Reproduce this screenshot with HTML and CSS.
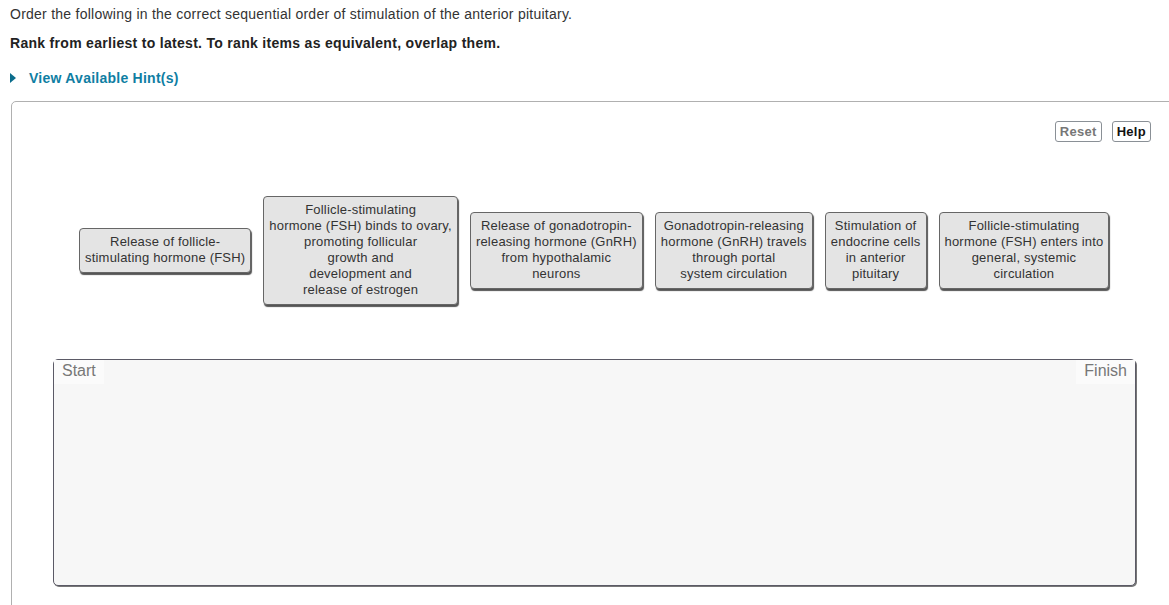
FILE: index.html
```html
<!DOCTYPE html>
<html>
<head>
<meta charset="utf-8">
<link rel="stylesheet" href="styles.css">
</head>
<body>
<div class="page">
  <p class="prompt">Order the following in the correct sequential order of stimulation of the anterior pituitary.</p>
  <p class="instr">Rank from earliest to latest. To rank items as equivalent, overlap them.</p>
  <div class="hint"><span class="tri"></span><span class="hint-text">View Available Hint(s)</span></div>
  <div class="panel">
    <div class="toolbar">
      <button class="btn btn-reset">Reset</button>
      <button class="btn btn-help">Help</button>
    </div>
    <div class="pool">
      <div class="card">Release of follicle-<br>stimulating hormone (FSH)</div>
      <div class="card">Follicle-stimulating<br>hormone (FSH) binds to ovary,<br>promoting follicular<br>growth and<br>development and<br>release of estrogen</div>
      <div class="card">Release of gonadotropin-<br>releasing hormone (GnRH)<br>from hypothalamic<br>neurons</div>
      <div class="card">Gonadotropin-releasing<br>hormone (GnRH) travels<br>through portal<br>system circulation</div>
      <div class="card">Stimulation of<br>endocrine cells<br>in anterior<br>pituitary</div>
      <div class="card">Follicle-stimulating<br>hormone (FSH) enters into<br>general, systemic<br>circulation</div>
    </div>
    <div class="dropzone">
      <span class="label">Start</span>
      <span class="label">Finish</span>
    </div>
  </div>
</div>
</body>
</html>
```
FILE: styles.css
```css
html, body {
  margin: 0;
  padding: 0;
  background: #fff;
  overflow: hidden;
}
body {
  font-family: "Liberation Sans", Arial, sans-serif;
  color: #333;
}
.page {
  padding: 6px 0 0 10px;
}
.prompt {
  margin: 0;
  font-size: 14px;
  line-height: 17px;
  letter-spacing: 0.25px;
}
.instr {
  margin: 12px 0 0 0;
  font-size: 14px;
  line-height: 17px;
  font-weight: bold;
  color: #222;
  letter-spacing: 0.3px;
}
.hint {
  margin-top: 17px;
  display: flex;
  align-items: center;
  height: 17px;
}
.tri {
  width: 0;
  height: 0;
  border-top: 5px solid transparent;
  border-bottom: 5px solid transparent;
  border-left: 6px solid #0b6d8c;
  margin-right: 13px;
}
.hint-text {
  font-size: 14px;
  font-weight: bold;
  color: #0f7ea3;
  letter-spacing: 0.25px;
}
.panel {
  margin: 15px 0 0 1px;
  width: 1200px;
  height: 540px;
  border: 1px solid #b0b0b0;
  border-radius: 5px;
  box-sizing: border-box;
  padding: 19px 0 0 0;
}
.toolbar {
  display: flex;
  justify-content: flex-end;
  gap: 10px;
  padding-right: 59px;
}
.btn {
  font-family: "Liberation Sans", Arial, sans-serif;
  font-size: 13px;
  font-weight: bold;
  height: 21px;
  padding: 0 4px;
  background: #fff;
  border: 1px solid #8a9096;
  border-radius: 3px;
  line-height: 19px;
  letter-spacing: 0.3px;
}
.btn-reset { color: #777; }
.btn-help { color: #111; }
.pool {
  display: flex;
  align-items: center;
  gap: 12px;
  margin-top: 54px;
  padding-left: 67px;
}
.card {
  background: #e4e4e4;
  border: 1px solid #666;
  border-radius: 4px;
  box-shadow: 1px 2px 1px #555;
  padding: 5px 5px 6px 5px;
  font-size: 13px;
  line-height: 16px;
  letter-spacing: 0.2px;
  text-align: center;
  white-space: nowrap;
  color: #333;
}
.dropzone {
  margin: 54px 0 0 41px;
  width: 1083px;
  height: 227px;
  box-sizing: border-box;
  background: #f7f7f7;
  border: 1px solid #5b5a66;
  border-radius: 5px;
  box-shadow: 1px 1px 0 #777;
  display: flex;
  justify-content: space-between;
  align-items: flex-start;
}
.label {
  font-size: 16px;
  color: #777;
  background: #fbfbfb;
  padding: 2px 8px 4px 8px;
  line-height: 18px;
}
```
